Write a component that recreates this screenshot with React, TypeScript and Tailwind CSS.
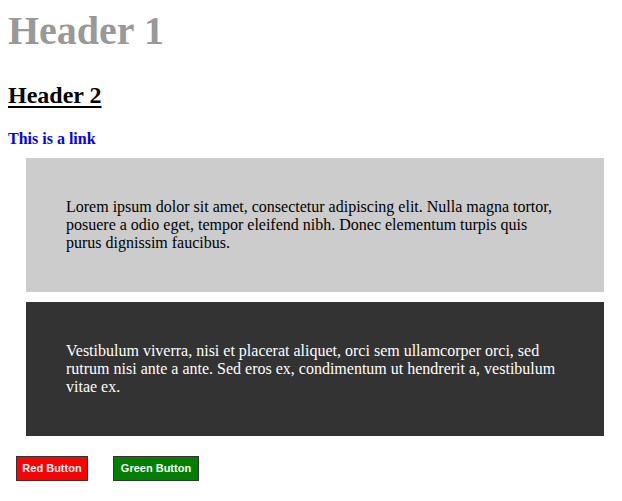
export default function App() {
	return (
		<div className="min-h-[501px] bg-white px-2 pt-2 font-['Liberation_Serif',serif]">
			<h1 className="text-[40px] font-bold leading-[46px] text-[#999999]">Header 1</h1>
			<h2 className="mt-[27px] text-[24px] font-bold leading-[28px] text-black underline underline-offset-[3px]">
				Header 2
			</h2>
			<a href="#" className="mt-[21px] block text-[16px] font-bold leading-[18px] text-[#0000ff]">
				This is a link
			</a>
			<div className="ml-[18px] mr-[10px] mt-[10px] flex flex-col gap-[10px]">
				<div className="bg-[#cccccc] py-[40px] pl-[40px] pr-[48px] text-[16px] leading-[18px] text-black">
					<p>
						Lorem ipsum dolor sit amet, consectetur adipiscing elit. Nulla magna tortor, posuere a odio eget,
						tempor eleifend nibh. Donec elementum turpis quis purus dignissim faucibus.
					</p>
				</div>
				<div className="bg-[#333333] py-[40px] pl-[40px] pr-[48px] text-[16px] leading-[18px] text-white">
					<p>
						Vestibulum viverra, nisi et placerat aliquet, orci sem ullamcorper orci, sed rutrum nisi ante a
						ante. Sed eros ex, condimentum ut hendrerit a, vestibulum vitae ex.
					</p>
				</div>
			</div>
			<div className="mt-[20px] flex gap-[25px] pl-[8px] font-['Liberation_Sans',sans-serif]">
				<button className="h-[25px] w-[72px] border border-[#333333] bg-[#ff0000] text-[11px] font-bold text-white">
					Red Button
				</button>
				<button className="h-[25px] w-[86px] border border-[#333333] bg-[#008000] text-[11px] font-bold text-white">
					Green Button
				</button>
			</div>
		</div>
	);
}
